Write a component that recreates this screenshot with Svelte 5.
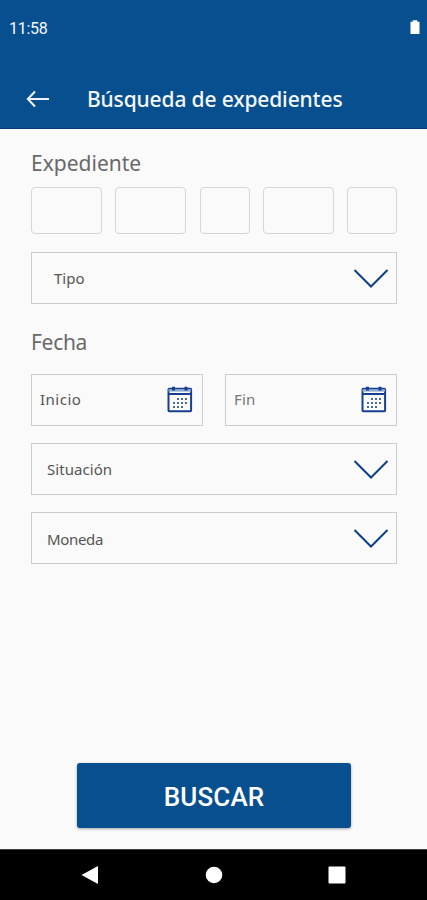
<script lang="ts">
  const parts = [
    { id: 'organo', size: 71 },
    { id: 'numero', size: 71 },
    { id: 'digito', size: 50 },
    { id: 'anio', size: 71 },
    { id: 'sufijo', size: 50 }
  ];
  const calendarDots = [
    [10, 12], [14, 12], [18, 12],
    [6, 16], [10, 16], [14, 16], [18, 16],
    [6, 20], [10, 20], [14, 20]
  ];
</script>

{#snippet chevron()}
  <svg class="chevron" width="36" height="22" viewBox="0 0 36 22" aria-hidden="true">
    <path d="M1.5 2 18 18.5 34.5 2" />
  </svg>
{/snippet}

{#snippet calendar()}
  <svg class="calendar" width="26" height="27" viewBox="0 0 26 27" aria-hidden="true">
    <rect class="frame" x="1.5" y="2.8" width="22.6" height="22.4" rx="0.8" />
    <path class="band" d="M1.5 4.4H24" />
    <path class="rule" d="M1 8H24.5" />
    <path class="rings" d="M6.5 0.8V4.5M19 0.8V4.5" />
    {#each calendarDots as [x, y]}
      <rect class="dot" {x} {y} width="2" height="2" />
    {/each}
  </svg>
{/snippet}

<div class="screen">
  <header>
    <div class="status-bar">
      <span class="clock">11:58</span>
      <svg width="10" height="15" viewBox="0 0 10 15" aria-hidden="true">
        <path d="M2.7 0.3H7.3V1.7H9.5V14H0.5V1.7H2.7Z" />
      </svg>
    </div>
    <div class="toolbar">
      <button class="back" aria-label="Volver">
        <svg width="24" height="18" viewBox="0 0 24 18" aria-hidden="true">
          <path d="M23 9H2M9 1.5 1.8 9 9 16.5" />
        </svg>
      </button>
      <h1>Búsqueda de expedientes</h1>
    </div>
  </header>

  <main>
    <h2>Expediente</h2>
    <div class="parts">
      {#each parts as part (part.id)}
        <div class="part" style:width={`${part.size}px`}></div>
      {/each}
    </div>
    <div class="field tipo">
      <span>Tipo</span>
      {@render chevron()}
    </div>

    <h2 class="fecha">Fecha</h2>
    <div class="dates">
      <div class="field date">
        <span class="inicio">Inicio</span>
        {@render calendar()}
      </div>
      <div class="field date">
        <span class="fin">Fin</span>
        {@render calendar()}
      </div>
    </div>
    <div class="field">
      <span class="situacion">Situación</span>
      {@render chevron()}
    </div>
    <div class="field">
      <span class="moneda">Moneda</span>
      {@render chevron()}
    </div>

    <button class="search">BUSCAR</button>
  </main>

  <nav>
    <svg width="18" height="20" viewBox="0 0 18 20" aria-hidden="true"><path d="M0.5 10 17 1V19Z" /></svg>
    <svg width="18" height="18" viewBox="0 0 18 18" aria-hidden="true"><circle cx="9" cy="9" r="8.3" /></svg>
    <svg width="18" height="18" viewBox="0 0 18 18" aria-hidden="true"><rect x="0.5" y="0.5" width="17" height="17" rx="1" /></svg>
  </nav>
</div>

<style>
  :global(body) {
    background: #fafafa;
  }

  .screen {
    display: flex;
    flex-direction: column;
    width: 427px;
    height: 900px;
    overflow: hidden;
    background: #fafafa;
    font-family: 'Noto Sans', 'Open Sans', sans-serif;
  }

  button {
    border: 0;
    padding: 0;
    color: #fff;
  }

  header {
    box-sizing: border-box;
    height: 129px;
    border-bottom: 1px solid #06387b;
    background: #084f8f;
    color: #f4f8ff;
  }

  .status-bar {
    display: flex;
    align-items: center;
    justify-content: space-between;
    height: 56px;
    padding: 0 7px 0 9px;
    font: 400 16px Roboto, sans-serif;
    letter-spacing: -0.3px;
  }

  .status-bar svg {
    margin-top: -1px;
    fill: #fff;
  }

  .toolbar {
    display: flex;
    align-items: center;
    height: 72px;
    padding: 14px 0 0 26px;
    box-sizing: border-box;
  }

  .back {
    display: flex;
    width: 61px;
    background: none;
  }

  .back path {
    fill: none;
    stroke: #eef4ff;
    stroke-width: 2;
  }

  h1 {
    margin: 0;
    font-size: 21px;
    font-weight: 500;
    letter-spacing: -0.14px;
    white-space: nowrap;
  }

  main {
    display: flex;
    flex: 1;
    flex-direction: column;
    padding: 20px 30px 21px 31px;
  }

  h2 {
    margin: 0 0 10px;
    color: #696969;
    font-size: 21px;
    font-weight: 400;
    line-height: 28px;
  }

  .parts {
    display: flex;
    justify-content: space-between;
    margin-bottom: 18px;
  }

  .part {
    box-sizing: border-box;
    height: 47px;
    border: 1.5px solid #d5d5d5;
    border-radius: 4px;
  }

  .field {
    display: flex;
    box-sizing: border-box;
    align-items: center;
    justify-content: space-between;
    height: 52px;
    margin-bottom: 17px;
    border: 1.5px solid #cccece;
    padding: 0 7px 0 15px;
    color: #555;
    font-size: 15px;
  }

  .tipo {
    padding-left: 22px;
  }

  .fecha {
    margin-top: 7px;
    margin-bottom: 18px;
    letter-spacing: -0.3px;
  }

  .dates {
    display: flex;
    justify-content: space-between;
    margin-bottom: 17px;
  }

  .date {
    width: 172px;
    margin-bottom: 0;
    padding: 0 9px 2px 8px;
  }

  .inicio {
    letter-spacing: 0.5px;
  }

  .fin {
    color: #777;
    letter-spacing: 0.2px;
  }

  .situacion {
    letter-spacing: 0.05px;
  }

  .moneda {
    padding-top: 1px;
    letter-spacing: -0.35px;
  }

  .chevron {
    margin-top: 2px;
  }

  .chevron path {
    fill: none;
    stroke: #0b3f88;
    stroke-width: 2;
  }

  .calendar .frame,
  .calendar .rule,
  .calendar .rings {
    fill: none;
    stroke: #163f91;
    stroke-width: 2;
  }

  .calendar .band {
    stroke: #8fa9cf;
    stroke-width: 2.4;
  }

  .calendar .rings {
    stroke-width: 3;
  }

  .calendar .dot {
    fill: #4a68a5;
  }

  .search {
    align-self: center;
    width: 274px;
    height: 65px;
    margin-top: auto;
    padding-top: 2px;
    border-radius: 3px;
    background: #084f8f;
    box-shadow: 0 1px 3px rgb(0 0 0 / 35%);
    font: 500 26px Roboto, sans-serif;
    letter-spacing: 0.15px;
  }

  nav {
    display: flex;
    align-items: center;
    justify-content: space-between;
    height: 51px;
    box-sizing: border-box;
    border-top: 1px solid #444;
    padding: 0 81px;
    background: #000;
    fill: #fff;
  }
</style>
